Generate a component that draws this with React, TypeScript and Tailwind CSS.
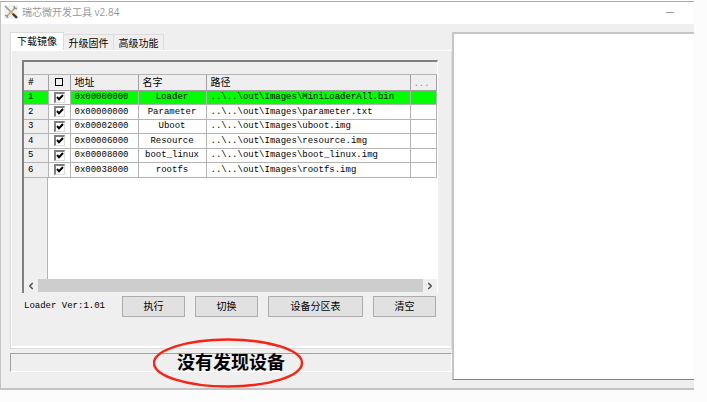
import { ChevronLeft, ChevronRight } from "lucide-react"

const tabs = ["下载镜像", "升级固件", "高级功能"]

const images = [
  { address: "0x00000000", name: "Loader", path: "..\\..\\out\\Images\\MiniLoaderAll.bin" },
  { address: "0x00000000", name: "Parameter", path: "..\\..\\out\\Images\\parameter.txt" },
  { address: "0x00002000", name: "Uboot", path: "..\\..\\out\\Images\\uboot.img" },
  { address: "0x00006000", name: "Resource", path: "..\\..\\out\\Images\\resource.img" },
  { address: "0x00008000", name: "boot_linux", path: "..\\..\\out\\Images\\boot_linux.img" },
  { address: "0x00038000", name: "rootfs", path: "..\\..\\out\\Images\\rootfs.img" },
]

const actions = [
  { label: "执行", width: "w-[63px]" },
  { label: "切换", width: "w-[63px]" },
  { label: "设备分区表", width: "w-[95px]" },
  { label: "清空", width: "w-[63px]" },
]

function ToolIcon() {
  return (
    <svg viewBox="0 0 14 14" className="h-[14px] w-[14px] bg-[#f1f1f0]" aria-hidden="true">
      <path d="M11.5 2.5 3.500 10.500" stroke="#a3a9a4" strokeWidth="1.6" />
      <path d="M10.200 1 10.500 3.300 13 3.600M1 10.500 3.300 10.800 3.600 13" fill="none" stroke="#8b918c" strokeWidth="1.5" />
      <path d="M1.500 1.500 6.500 6.500" stroke="#9a9c98" strokeWidth="1.6" strokeLinecap="round" />
      <path d="M6.500 6.500 10 10" stroke="#e0b545" strokeWidth="2.4" />
      <path d="M9.500 9.500 12.200 12.200" stroke="#3c3a34" strokeWidth="2.4" strokeLinecap="round" />
    </svg>
  )
}

function TitleBar() {
  return (
    <header className="flex h-[22px] items-center bg-white pr-5 pb-0.5 pl-[3px]">
      <ToolIcon />
      <h1 className="ml-1 flex-1 text-[10px] text-[#999]">瑞芯微开发工具 v2.84</h1>
      <button aria-label="最小化" className="flex h-4 w-2 items-center">
        <span className="h-px w-full bg-[#999]" />
      </button>
    </header>
  )
}

function Tabs() {
  return (
    <div role="tablist" className="flex h-[18px] items-end">
      {tabs.map((tab, i) => (
        <button
          key={tab}
          role="tab"
          aria-selected={i === 0}
          className={
            i === 0
              ? "h-[18px] w-[54px] border-x border-t border-[#dcdcdc] bg-white pb-px"
              : "h-4 w-[50px] border-t border-r border-[#dcdcdc]"
          }
        >
          {tab}
        </button>
      ))}
    </div>
  )
}

function ImageTable() {
  return (
    <div className="border-t-2 border-r border-l-2 border-t-[#808080] border-r-white border-l-[#808080] bg-white">
      <div className="h-[13px] border-b border-[#b4b4b4] bg-[#efefef]" />
      <table className="w-full table-fixed border-collapse text-[9px] leading-3">
        <colgroup>
          <col className="w-6" />
          <col className="w-[22px]" />
          <col className="w-[68px]" />
          <col className="w-[68px]" />
          <col />
          <col className="w-[26px]" />
        </colgroup>
        <thead className="bg-[#efefef] text-left text-[10px]">
          <tr className="h-[15px] border-b border-[#a0a0a0] *:border-r *:border-[#a0a0a0] *:p-0 *:pl-1 *:font-normal">
            <th className="text-[9px]">#</th>
            <th aria-label="选择">
              <span className="ml-0.5 block h-2 w-2 border border-black" />
            </th>
            <th>地址</th>
            <th>名字</th>
            <th>路径</th>
            <th className="text-[#808080]">. . .</th>
          </tr>
        </thead>
        <tbody className="font-['Liberation_Mono',monospace]">
          {images.map((image, i) => (
            <tr
              key={image.name}
              className={`border-b border-[#b4b4b4] odd:h-[14px] even:h-[15px] *:border-r *:border-[#b4b4b4] *:p-0 ${i === 0 ? "bg-[#00ff00]" : "bg-white"}`}
            >
              <td className={i === 0 ? "pl-1!" : "bg-[#efefef] pl-1!"}>{i + 1}</td>
              <td className="bg-white">
                <label className="relative mx-auto block h-[11px] w-[11px]">
                  <input
                    type="checkbox"
                    defaultChecked
                    aria-label={image.name}
                    className="peer block h-[11px] w-[11px] appearance-none border-t-2 border-r border-b border-l-2 border-t-[#808080] border-r-[#dcdcdc] border-b-[#dcdcdc] border-l-[#808080] bg-white"
                  />
                  <svg viewBox="0 0 11 11" className="invisible absolute inset-0 peer-checked:visible">
                    <path d="M3 5 5 7.200 9 3" fill="none" stroke="#000" strokeWidth="2" />
                  </svg>
                </label>
              </td>
              <td className="pl-1!">{image.address}</td>
              <td className="text-center">{image.name}</td>
              <td className="pl-1! whitespace-nowrap">{image.path}</td>
              <td />
            </tr>
          ))}
        </tbody>
      </table>
      <div className="h-[101px] w-6 border-r border-[#b4b4b4] bg-[#efefef]" />
      <div className="flex h-[14px] items-center bg-[#f0f0f0] text-[#505050]">
        <button aria-label="向左滚动" className="flex w-[14px] justify-center">
          <ChevronLeft size={10} strokeWidth={4} />
        </button>
        <div className="h-[13px] flex-1 bg-[#cdcdcd]" />
        <button aria-label="向右滚动" className="flex w-[14px] justify-center">
          <ChevronRight size={10} strokeWidth={4} />
        </button>
      </div>
    </div>
  )
}

function StatusBar() {
  return (
    <footer className="relative mt-1 flex h-[19px] items-center justify-center border border-t-[#a0a0a0] border-r-white border-b-white border-l-[#a0a0a0]">
      <p className="text-lg leading-none font-semibold">没有发现设备</p>
      {/* Red marker drawn round the message */}
      <svg viewBox="0 0 156 52" className="absolute -top-4 left-1/2 h-[52px] w-[156px] -translate-x-1/2" aria-hidden="true">
        <ellipse cx="75" cy="25" rx="74" ry="23.500" fill="none" stroke="#f92314" strokeWidth="2.4" />
      </svg>
    </footer>
  )
}

export default function App() {
  return (
    <div className="min-h-screen bg-[#fcfcfc] pt-px pr-[13px] font-['Open_Sans','Noto_Sans_CJK_SC',sans-serif] text-[10px] leading-3 text-black">
      <div className="border-t border-b-2 border-l border-t-[#aaa] border-b-[#c4c4c4] border-l-[#c4c4c4] bg-[#efefef]">
        <TitleBar />
        <main className="flex pt-2 pb-2 pl-[9px]">
          <div className="w-[442px] shrink-0 pb-2">
            <Tabs />
            <section className="border border-t-white border-r-[#dcdcdc] border-b-[#dcdcdc] border-l-[#dcdcdc]">
              <div className="border-b-2 border-l border-white pt-[9px] pr-[13px] pb-[29px] pl-[10px]">
                <ImageTable />
                <div className="flex items-center gap-[10px] pt-[3px]">
                  <span className="w-[90px] pl-0.5 font-['Liberation_Mono',monospace] text-[9px] whitespace-nowrap">
                    Loader Ver:1.01
                  </span>
                  {actions.map((action) => (
                    <button key={action.label} className={`h-[21px] border border-[#adadad] bg-[#e1e1e1] ${action.width}`}>
                      {action.label}
                    </button>
                  ))}
                </div>
              </div>
            </section>
            <StatusBar />
          </div>
          <textarea
            aria-label="日志"
            readOnly
            className="min-w-0 flex-1 resize-none border-t-2 border-b border-l-2 border-t-[#c4c4c9] border-b-[#828287] border-l-[#c4c4c9] bg-white"
          />
        </main>
      </div>
    </div>
  )
}
